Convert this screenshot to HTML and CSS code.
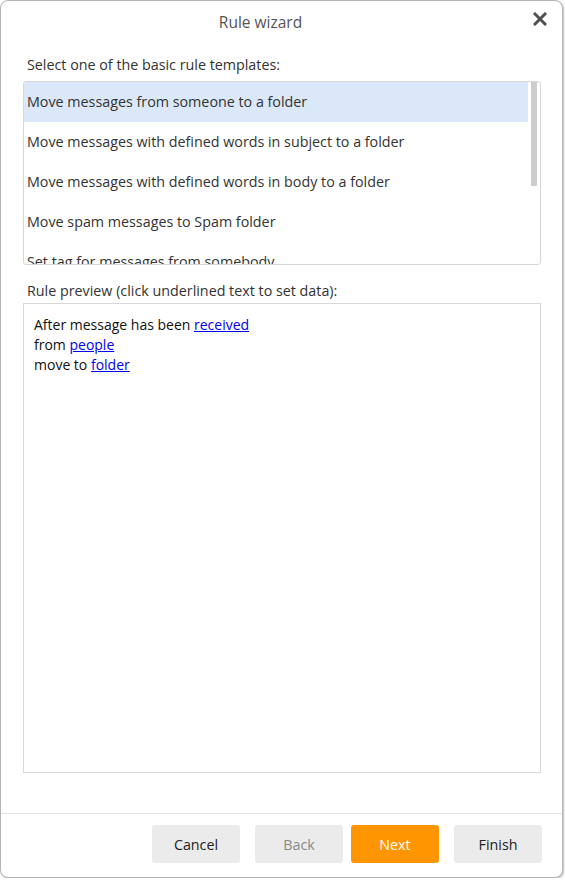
FILE: index.html
```html
<!DOCTYPE html>
<html>
<head>
    <meta charset="UTF-8">
    <title>Rule wizard</title>
    <link rel="stylesheet" href="styles.css">
</head>
<body>
    <div class="dialog">
        <div class="dialog-header">
            <span class="dialog-title">Rule wizard</span>
            <span class="close-btn">
                <svg width="14" height="14" viewBox="0 0 14 14">
                    <path d="M2 2 L12 12 M12 2 L2 12" stroke="#505050" stroke-width="3" stroke-linecap="square"/>
                </svg>
            </span>
        </div>

        <div class="dialog-body">
            <div class="field-label">Select one of the basic rule templates:</div>
            <div class="template-list">
                <div class="template-items">
                    <div class="template-item selected">Move messages from someone to a folder</div>
                    <div class="template-item">Move messages with defined words in subject to a folder</div>
                    <div class="template-item">Move messages with defined words in body to a folder</div>
                    <div class="template-item">Move spam messages to Spam folder</div>
                    <div class="template-item">Set tag for messages from somebody</div>
                </div>
                <div class="scroll-track"><div class="scroll-thumb"></div></div>
            </div>

            <div class="field-label preview-label">Rule preview (click underlined text to set data):</div>
            <div class="preview-box">
                <div>After message has been <a href="#">received</a></div>
                <div>from <a href="#">people</a></div>
                <div>move to <a href="#">folder</a></div>
            </div>
        </div>

        <div class="dialog-footer">
            <button class="btn">Cancel</button>
            <button class="btn disabled">Back</button>
            <button class="btn primary">Next</button>
            <button class="btn">Finish</button>
        </div>
    </div>
</body>
</html>
```

FILE: styles.css
```css
body {
    margin: 0;
    background: #ffffff;
    font-family: "Open Sans", "Noto Sans", Arial, sans-serif;
    font-size: 14.3px;
    color: #333;
}

.dialog {
    width: 561px;
    height: 876px;
    border: 1px solid #b4b4b4;
    border-radius: 8px;
    box-shadow: 1px 1px 2px rgba(0, 0, 0, 0.25);
    display: flex;
    flex-direction: column;
    background: #fff;
}

.dialog-header {
    height: 42px;
    display: flex;
    align-items: center;
    justify-content: center;
    padding-right: 42px;
    position: relative;
}

.dialog-title {
    font-size: 15.5px;
    color: #555;
}

.close-btn {
    position: absolute;
    right: 15px;
    top: 10px;
}

.dialog-body {
    flex: 1;
    padding: 12px 21px 0 22px;
    display: flex;
    flex-direction: column;
}

.field-label {
    padding-left: 4px;
    height: 26px;
    line-height: 20px;
    color: #333;
}

.template-list {
    height: 182px;
    border: 1px solid #d6d6d6;
    border-radius: 3px;
    display: flex;
    overflow: hidden;
}

.template-items {
    flex: 1;
}

.template-item {
    height: 40px;
    line-height: 40px;
    padding-left: 3px;
    color: #333;
    white-space: nowrap;
}

.template-item.selected {
    background: #dbe8f9;
}

.scroll-track {
    width: 12px;
    display: flex;
    justify-content: center;
}

.scroll-thumb {
    width: 6px;
    height: 104px;
    background: #cdcdcd;
}

.preview-label {
    margin-top: 16px;
    height: 22px;
}

.preview-box {
    height: 446px;
    border: 1px solid #d8d8d8;
    padding: 11px 10px;
    font-size: 14px;
    line-height: 20px;
    color: #111;
}

.preview-box a {
    color: #0000ee;
    text-decoration: underline;
}

.dialog-footer {
    box-sizing: border-box;
    height: 64px;
    border-top: 1px solid #e3e3e3;
    display: flex;
    justify-content: flex-end;
    align-items: flex-start;
    padding: 11px 20px 0 0;
    gap: 15px;
}

.btn {
    width: 88px;
    height: 38px;
    border: none;
    border-radius: 3px;
    background: #ebebeb;
    font-family: inherit;
    font-size: 14.3px;
    color: #222;
}

.btn.disabled {
    color: #8a8a8a;
}

.btn.primary {
    background: #ff9500;
    color: #fff;
    margin-left: -7px;
}
```
